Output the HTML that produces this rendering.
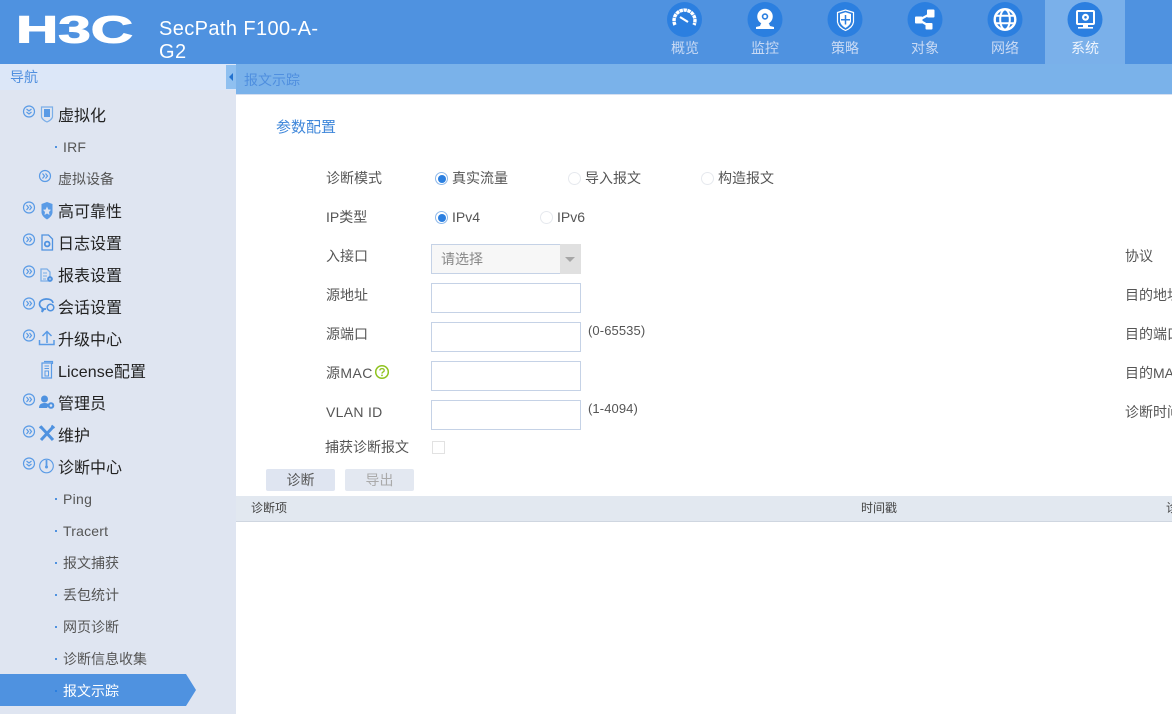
<!DOCTYPE html>
<html lang="zh">
<head>
<meta charset="utf-8">
<title>SecPath F100-A-G2</title>
<style>
html,body{margin:0;padding:0;background:#fff}
body{width:1172px;height:714px;position:relative;overflow:hidden;font-family:"Liberation Sans","Noto Sans CJK SC",sans-serif;font-size:14px;color:#555}
.a{position:absolute}
.t{position:absolute;height:20px;line-height:20px;white-space:nowrap}
.l{color:#555;font-size:14px;left:326px}
.r{color:#555;font-size:14px;left:1125px}
.m{color:#222;font-size:16px;left:58px}
.s{color:#555;font-size:14px;left:63px}
.d{position:absolute;left:55px;width:2px;height:2px;background:#4f92e0}
.n{position:absolute;width:80px;top:38px;text-align:center;font-size:14px;line-height:20px;color:#c9daf4}
.i{position:absolute;left:431px;width:148px;height:28px;border:1px solid #c5d2e6;background:#fff}
.rd{position:absolute;width:11px;height:11px;border:1px solid #e6e9ee;border-radius:50%;background:#fff}
.on{border:1px solid #8db8ea;background:#fff}
.on:after{content:"";position:absolute;left:1.5px;top:1.5px;width:8px;height:8px;border-radius:50%;background:#2b7fe0}
svg{position:absolute;overflow:visible}
</style>
</head>
<body>
<div class="a" style="left:0;top:0;width:1172px;height:64px;background:#4f92e0"></div>
<div class="a" style="left:1045px;top:0;width:80px;height:64px;background:#7ab0ea"></div>

<svg style="left:0;top:0" width="150" height="64">
  <text x="16" y="42.500" font-family="Liberation Sans" font-weight="700" font-size="38" fill="#fff" stroke="#fff" stroke-width="1" textLength="117" lengthAdjust="spacingAndGlyphs">H3C</text>
</svg>
<div class="t" style="left:159px;top:18px;font-size:20px;color:#fff;line-height:22px;height:22px;letter-spacing:.4px">SecPath F100-A-</div>
<div class="t" style="left:159px;top:41px;font-size:20px;color:#fff;line-height:22px;height:22px;letter-spacing:.4px">G2</div>

<svg style="left:0;top:0" width="1172" height="40">
  <g fill="#2b7fe0"><circle cx="684.5" cy="19.5" r="17.5"/><circle cx="765" cy="19.5" r="17.5"/><circle cx="845" cy="19.5" r="17.5"/><circle cx="925" cy="19.5" r="17.5"/><circle cx="1005" cy="19.5" r="17.5"/><circle cx="1085" cy="19.5" r="17.5"/></g>
  <g fill="none" stroke="#fff">
    <path d="M675 25 A10.5 10.5 0 1 1 694 25" stroke-width="3.400" stroke-dasharray="3.400 .6"/>
    <path d="M680 17 L688 22" stroke-width="2.200"/>
    <circle cx="765" cy="16.500" r="5.500" stroke-width="4.500"/>
    <path d="M837.500 12.500 L845.500 10 L853.500 12.500 V22 Q852.500 27.500 845.500 30.500 Q838.500 27.500 837.500 22 Z" stroke-width="1.200"/>
    <path d="M840 14 L845.500 12.300 L851 14 V21.500 Q850 25.500 845.500 28 Q841 25.500 840 21.500 Z" fill="#fff" stroke="none"/>
    <path d="M845.500 15 V24.500 M841 19.700 H850" stroke="#2b7fe0" stroke-width="1.500"/>
    <path d="M931 13.500 L919 20 L929 26" stroke-width="2.200"/>
    <circle cx="1005" cy="19.500" r="10.300" stroke-width="2.400"/>
    <ellipse cx="1005" cy="19.500" rx="4.800" ry="10" stroke-width="2"/>
    <path d="M995.500 15.800 H1014.500 M995.500 23.200 H1014.500" stroke-width="2"/>
    <rect x="1077" y="11" width="17" height="13" rx="1" stroke-width="2"/>
  </g>
  <g fill="#fff">
    <path d="M761 23.500 L769 23.500 L770 26 L774 27 V29 H756 V27 L760 26 Z"/>
    <circle cx="765" cy="16.500" r="1.600"/>
    <rect x="927" y="9.500" width="7.500" height="8" rx="1"/>
    <rect x="915" y="16.500" width="7.500" height="7" rx="1"/>
    <rect x="925.500" y="23" width="7" height="6.500" rx="1"/>
    <rect x="1083" y="24" width="5" height="3"/>
    <rect x="1078" y="27" width="15" height="1.600"/>
    <circle cx="1085.500" cy="17.300" r="3.500"/>
  </g>
  <circle cx="1085.500" cy="17.300" r="1.300" fill="#2b7fe0"/>
</svg>
<div class="n" style="left:645px">概览</div>
<div class="n" style="left:725px">监控</div>
<div class="n" style="left:805px">策略</div>
<div class="n" style="left:885px">对象</div>
<div class="n" style="left:965px">网络</div>
<div class="n" style="left:1045px;color:#eef4fd">系统</div>

<!-- sidebar -->
<div class="a" style="left:0;top:64px;width:236px;height:650px;background:#dfe5f1"></div>
<div class="a" style="left:0;top:64px;width:236px;height:26px;background:#dce7f8"></div>
<div class="t" style="left:10px;top:67px;font-size:14px;color:#4f8fdf">导航</div>
<div class="a" style="left:226px;top:65px;width:10px;height:24px;background:#8fc0f0"></div>
<svg style="left:226px;top:65px" width="10" height="24"><path d="M3 12 L7 8 V16 Z" fill="#2272cf"/></svg>

<div class="a" style="left:236px;top:64px;width:936px;height:30px;background:#7ab2ea"></div>
<div class="a" style="left:236px;top:94px;width:936px;height:1px;background:#d5dff0"></div>
<div class="t" style="left:244px;top:70px;font-size:14px;color:#4f8fdf">报文示踪</div>

<!-- sidebar icons -->
<svg style="left:0;top:0" width="236" height="714">
  <g fill="none" stroke="#5a9be6" stroke-width="1.200">
    <circle cx="29" cy="111.500" r="5.500"/><circle cx="45" cy="176" r="5.500"/><circle cx="29" cy="207.500" r="5.500"/><circle cx="29" cy="239.500" r="5.500"/><circle cx="29" cy="271.500" r="5.500"/><circle cx="29" cy="303.500" r="5.500"/><circle cx="29" cy="335.500" r="5.500"/><circle cx="29" cy="399.500" r="5.500"/><circle cx="29" cy="431.500" r="5.500"/><circle cx="29" cy="463.500" r="5.500"/>
    <path d="M26.500 109 L29 111 L31.500 109 M26.500 112 L29 114 L31.500 112"/>
    <path d="M26.500 461 L29 463 L31.500 461 M26.500 464 L29 466 L31.500 464"/>
    <path d="M42.500 173.500 L44.500 176 L42.500 178.500 M45.500 173.500 L47.500 176 L45.500 178.500"/>
    <path d="M26.500 205 L28.500 207.500 L26.500 210 M29.500 205 L31.500 207.500 L29.500 210"/>
    <path d="M26.500 237 L28.500 239.500 L26.500 242 M29.500 237 L31.500 239.500 L29.500 242"/>
    <path d="M26.500 269 L28.500 271.500 L26.500 274 M29.500 269 L31.500 271.500 L29.500 274"/>
    <path d="M26.500 301 L28.500 303.500 L26.500 306 M29.500 301 L31.500 303.500 L29.500 306"/>
    <path d="M26.500 333 L28.500 335.500 L26.500 338 M29.500 333 L31.500 335.500 L29.500 338"/>
    <path d="M26.500 397 L28.500 399.500 L26.500 402 M29.500 397 L31.500 399.500 L29.500 402"/>
    <path d="M26.500 429 L28.500 431.500 L26.500 434 M29.500 429 L31.500 431.500 L29.500 434"/>
  </g>
  <!-- vm -->
  <path d="M41.500 107 H52.500 V117 Q51.500 120 47 122 Q42.500 120 41.500 117 Z" fill="none" stroke="#7aaee8" stroke-width="1.200"/>
  <rect x="44" y="109" width="6" height="8" fill="#5a9be6"/>
  <!-- HA -->
  <path d="M41.500 204 L47 202 L52.500 204 V213 Q51.500 217 47 219.500 Q42.500 217 41.500 213 Z" fill="#5a9be6"/>
  <path d="M47 206.500 L48.300 209.500 L51 209.800 L49 212 L49.500 215 L47 213.500 L44.500 215 L45 212 L43 209.800 L45.700 209.500 Z" fill="#dfe5f1"/>
  <!-- log -->
  <path d="M42 235 H48.500 L52.500 239 V250 H42 Z" fill="none" stroke="#4f92e0" stroke-width="1.300"/>
  <circle cx="47.200" cy="244" r="2.400" fill="none" stroke="#4f92e0" stroke-width="1.800"/>
  <!-- report -->
  <path d="M41 269 H47 L50 272 V281 H41 Z" fill="none" stroke="#7aaee8" stroke-width="1.300"/>
  <path d="M43 273 H47 M43 276 H47 M43 279 H46" stroke="#7aaee8"/>
  <circle cx="50" cy="279" r="2" fill="none" stroke="#4f92e0" stroke-width="1.700"/>
  <!-- session -->
  <path d="M46 309 H44 L42 312 L42.500 308.500 Q39.500 306.500 39.500 304 C39.500 298 52 297 53 303" fill="none" stroke="#4f92e0" stroke-width="1.700"/>
  <circle cx="50.500" cy="307.500" r="3.300" fill="none" stroke="#4f92e0" stroke-width="1.500"/>
  <!-- upgrade -->
  <path d="M47 343 V332 M42.500 336 L47 331.500 L51.500 336 M39.500 340 V344.500 H54 V340" fill="none" stroke="#5a9be6" stroke-width="1.500"/>
  <!-- license -->
  <path d="M42 363 H51.500 V378 H42 Z M44 361.500 H52.500 V364" fill="none" stroke="#5a9be6" stroke-width="1.200"/>
  <path d="M44.500 366 H49 M44.500 368.500 H49" stroke="#5a9be6"/>
  <rect x="45" y="371" width="3.500" height="5" fill="none" stroke="#5a9be6"/>
  <!-- admin -->
  <circle cx="44.500" cy="399" r="3.500" fill="#4f92e0"/>
  <path d="M39 408 Q39 403 44.500 403 Q48 403 49 405 L47 408 Z" fill="#4f92e0"/>
  <circle cx="51" cy="405.500" r="2.300" fill="none" stroke="#4f92e0" stroke-width="2"/>
  <!-- tools -->
  <path d="M41 427 L53 440 M53 427 L41 440" stroke="#4f92e0" stroke-width="3"/>
  <path d="M39.500 428 L42 426 M54.500 428 L51.500 425.500" stroke="#4f92e0" stroke-width="2"/>
  <!-- diag -->
  <circle cx="46.500" cy="466" r="6.800" fill="none" stroke="#5a9be6" stroke-width="1.100"/>
  <path d="M46.500 460 V467" stroke="#5a9be6" stroke-width="1.800"/>
  <circle cx="46.500" cy="467" r="1.500" fill="#5a9be6"/>
  <!-- active row -->
  <path d="M0 674 H186 L196 690 L186 706 H0 Z" fill="#4f92e0"/>
</svg>

<div class="t m" style="top:107px">虚拟化</div>
<div class="d" style="top:146px"></div><div class="t s" style="top:137px;letter-spacing:.2px">IRF</div>
<div class="t" style="left:58px;top:169px;font-size:14px;color:#555">虚拟设备</div>
<div class="t m" style="top:203px">高可靠性</div>
<div class="t m" style="top:235px">日志设置</div>
<div class="t m" style="top:267px">报表设置</div>
<div class="t m" style="top:299px">会话设置</div>
<div class="t m" style="top:331px">升级中心</div>
<div class="t m" style="top:363px;letter-spacing:.1px">License配置</div>
<div class="t m" style="top:395px">管理员</div>
<div class="t m" style="top:427px">维护</div>
<div class="t m" style="top:459px">诊断中心</div>
<div class="d" style="top:498px"></div><div class="t s" style="top:489px;letter-spacing:.3px">Ping</div>
<div class="d" style="top:530px"></div><div class="t s" style="top:521px;letter-spacing:.2px">Tracert</div>
<div class="d" style="top:562px"></div><div class="t s" style="top:553px">报文捕获</div>
<div class="d" style="top:594px"></div><div class="t s" style="top:585px">丢包统计</div>
<div class="d" style="top:626px"></div><div class="t s" style="top:617px">网页诊断</div>
<div class="d" style="top:658px"></div><div class="t s" style="top:649px">诊断信息收集</div>
<div class="d" style="top:690px;background:#2b7fe0"></div><div class="t s" style="top:681px;color:#fff">报文示踪</div>

<!-- form -->
<div class="t" style="left:276px;top:118px;font-size:15px;color:#3f87da">参数配置</div>

<div class="t l" style="top:168px">诊断模式</div>
<div class="rd on" style="left:435px;top:172px"></div><div class="t l" style="left:452px;top:168px">真实流量</div>
<div class="rd" style="left:568px;top:172px"></div><div class="t l" style="left:585px;top:168px">导入报文</div>
<div class="rd" style="left:701px;top:172px"></div><div class="t l" style="left:718px;top:168px">构造报文</div>

<div class="t l" style="top:207px">IP类型</div>
<div class="rd on" style="left:435px;top:211px"></div><div class="t l" style="left:452px;top:207px">IPv4</div>
<div class="rd" style="left:540px;top:211px"></div><div class="t l" style="left:557px;top:207px">IPv6</div>

<div class="t l" style="top:246px">入接口</div>
<div class="a" style="left:431px;top:244px;width:128px;height:28px;border:1px solid #c5d2e6;background:#f7f7f7"></div>
<div class="a" style="left:560px;top:244px;width:21px;height:30px;background:#e0e0e0"></div>
<svg style="left:560px;top:244px" width="21" height="30"><path d="M5 13 H15 L10 18 Z" fill="#a6a6a6"/></svg>
<div class="t" style="left:441px;top:249px;color:#888">请选择</div>

<div class="t l" style="top:285px">源地址</div>
<div class="i" style="top:283px"></div>
<div class="t l" style="top:324px">源端口</div>
<div class="i" style="top:322px"></div>
<div class="t" style="left:588px;top:321px;font-size:13px;letter-spacing:.1px;color:#555">(0-65535)</div>
<div class="t l" style="top:363px;letter-spacing:.4px">源MAC</div>
<svg style="left:375px;top:365px" width="14" height="14"><circle cx="7" cy="7" r="6.300" fill="none" stroke="#8fc31f" stroke-width="1.500"/><path d="M4.800 5.500 Q5 3.600 7 3.600 Q9.200 3.600 9.200 5.400 Q9.200 6.500 8 7 Q7 7.500 7 8.600" fill="none" stroke="#8fc31f" stroke-width="1.300"/><circle cx="7" cy="10.400" r=".9" fill="#8fc31f"/></svg>
<div class="i" style="top:361px"></div>
<div class="t l" style="top:402px;letter-spacing:.3px">VLAN ID</div>
<div class="i" style="top:400px"></div>
<div class="t" style="left:588px;top:399px;font-size:13px;letter-spacing:.1px;color:#555">(1-4094)</div>
<div class="t l" style="left:325px;top:437px">捕获诊断报文</div>
<div class="a" style="left:432px;top:441px;width:11px;height:11px;border:1px solid #e2e2e2;background:#fff"></div>

<div class="t r" style="top:246px">协议</div>
<div class="t r" style="top:285px">目的地址</div>
<div class="t r" style="top:324px">目的端口</div>
<div class="t r" style="top:363px">目的MAC</div>
<div class="t r" style="top:402px">诊断时间</div>

<div class="a" style="left:266px;top:469px;width:69px;height:22px;line-height:22px;text-align:center;background:#dfe5f1;border-radius:2px;color:#555">诊断</div>
<div class="a" style="left:345px;top:469px;width:69px;height:22px;line-height:22px;text-align:center;background:#e3e8f1;border-radius:2px;color:#aaa">导出</div>

<div class="a" style="left:236px;top:496px;width:936px;height:25px;background:#e2e8f0;border-bottom:1px solid #cfd6e0"></div>
<div class="t" style="left:251px;top:498px;font-size:12px;color:#444">诊断项</div>
<div class="t" style="left:861px;top:498px;font-size:12px;color:#444">时间戳</div>
<div class="t" style="left:1166px;top:498px;font-size:12px;color:#444">诊</div>
</body>
</html>
